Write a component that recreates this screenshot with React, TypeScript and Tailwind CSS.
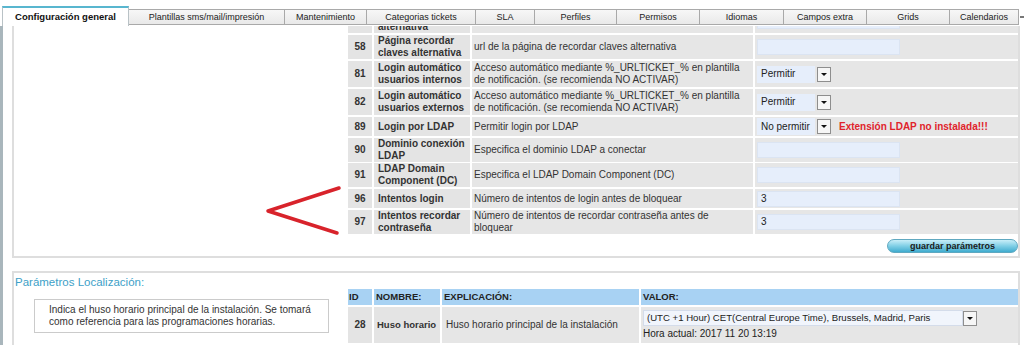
const tabs = [
  { label: 'Configuración general', w: 'w-[127px]', active: true },
  { label: 'Plantillas sms/mail/impresión', w: 'w-[156px]' },
  { label: 'Mantenimiento', w: 'w-[82px]' },
  { label: 'Categorias tickets', w: 'w-[109px]' },
  { label: 'SLA', w: 'w-[59px]' },
  { label: 'Perfiles', w: 'w-[82px]' },
  { label: 'Permisos', w: 'w-[83px]' },
  { label: 'Idiomas', w: 'w-[84px]' },
  { label: 'Campos extra', w: 'w-[83px]' },
  { label: 'Grids', w: 'w-[83px]' },
  { label: 'Calendarios', w: 'w-[69px]' },
]

type Row = {
  id: string
  name: string[]
  desc: string[]
  h: string
  kind: 'input' | 'permitir' | 'ldap'
  value?: string
  cut?: boolean
}

const rows: Row[] = [
  { id: '', name: ['alternativa'], desc: [''], h: 'h-[24px]', kind: 'input', cut: true },
  { id: '58', name: ['Página recordar', 'claves alternativa'], desc: ['url de la página de recordar claves alternativa'], h: 'h-[24px]', kind: 'input' },
  { id: '81', name: ['Login automático', 'usuarios internos'], desc: ['Acceso automático mediante %_URLTICKET_% en plantilla', 'de notificación. (se recomienda NO ACTIVAR)'], h: 'h-[26px]', kind: 'permitir' },
  { id: '82', name: ['Login automático', 'usuarios externos'], desc: ['Acceso automático mediante %_URLTICKET_% en plantilla', 'de notificación. (se recomienda NO ACTIVAR)'], h: 'h-[26px]', kind: 'permitir' },
  { id: '89', name: ['Login por LDAP'], desc: ['Permitir login por LDAP'], h: 'h-[19px]', kind: 'ldap' },
  { id: '90', name: ['Dominio conexión', 'LDAP'], desc: ['Especifica el dominio LDAP a conectar'], h: 'h-[23px]', kind: 'input' },
  { id: '91', name: ['LDAP Domain', 'Component (DC)'], desc: ['Especifica el LDAP Domain Component (DC)'], h: 'h-[24px]', kind: 'input' },
  { id: '96', name: ['Intentos login'], desc: ['Número de intentos de login antes de bloquear'], h: 'h-[19px]', kind: 'input', value: '3' },
  { id: '97', name: ['Intentos recordar', 'contraseña'], desc: ['Número de intentos de recordar contraseña antes de', 'bloquear'], h: 'h-[24px]', kind: 'input', value: '3' },
]

function Arrow() {
  return (
    <span className="flex h-[15px] w-[14px] items-center justify-center border border-[#8e8e8e] bg-[#f6f6f6]">
      <span className="h-0 w-0 border-x-[3px] border-t-[3px] border-x-transparent border-t-[#111]" />
    </span>
  )
}

function Lines({ lines }: { lines: string[] }) {
  return (
    <div>
      {lines.map((l, i) => (
        <div key={i} className="whitespace-nowrap">
          {l}
        </div>
      ))}
    </div>
  )
}

function Value({ row }: { row: Row }) {
  if (row.kind === 'permitir' || row.kind === 'ldap') {
    return (
      <div className="flex items-center gap-[2px]">
        <div className="flex h-[17px] w-[58px] items-center bg-[#e6eefb] pl-[4px] text-[#222]">
          {row.kind === 'ldap' ? 'No permitir' : 'Permitir'}
        </div>
        <Arrow />
        {row.kind === 'ldap' && (
          <span className="ml-[6px] font-bold text-[#e0232b]">Extensión LDAP no instalada!!!</span>
        )}
      </div>
    )
  }
  return (
    <div className="flex h-[16px] w-[143px] items-center border border-[#dbe4f2] bg-[#e6eefb] pl-[3px] text-[#222]">
      {row.value}
    </div>
  )
}

export default function App() {
  return (
    <div className="relative h-[345px] w-[1024px] overflow-hidden bg-white font-['Liberation_Sans',Arial,sans-serif] text-[10px] leading-[12px] text-[#333]">
      {/* tabs */}
      <div className="flex h-[26px] items-end pl-[2px]">
        {tabs.map((t) =>
          t.active ? (
            <div
              key={t.label}
              className={`${t.w} flex h-[20px] items-center justify-center border-x border-t-2 border-x-[#b9c2c6] border-t-[#58b6cf] bg-white text-[9.5px] font-bold text-[#111]`}
            >
              {t.label}
            </div>
          ) : (
            <div
              key={t.label}
              className={`${t.w} mb-[1px] flex h-[16px] items-center justify-center border border-l-0 border-[#a9a9a9] bg-gradient-to-b from-[#f7f7f7] to-[#e9e9e9] text-[9px] text-[#222]`}
            >
              {t.label}
            </div>
          ),
        )}
        <div className="mb-[8px] ml-[1px] h-[2px] w-[4px] bg-[#777]" />
      </div>

      <div className="flex h-[319px]">
        <div className="w-[3px] bg-[#a9b6bc]" />
        <div className="ml-[9px] w-[1008px]">
          {/* panel 1 */}
          <div className="flex h-[232px] overflow-hidden border-x-2 border-b-2 border-[#dedede]">
            <div className="w-[334px]" />
            <div className="w-[670px]">
              <div className="-mt-[17px] flex flex-col gap-[2px]">
                {rows.map((r, i) => (
                  <div key={i} className={`grid ${r.h} grid-cols-[24px_96px_281px_1fr] gap-[2px]`}>
                    <div className="flex items-center justify-center bg-[#e4e4e4] font-bold">{r.id}</div>
                    <div className={`flex ${r.cut ? 'items-end' : 'items-center'} bg-[#e4e4e4] pl-[4px] font-bold`}>
                      <Lines lines={r.name} />
                    </div>
                    <div className="flex items-center bg-[#e6e6e6] pl-[2px]">
                      <Lines lines={r.desc} />
                    </div>
                    <div className="flex items-center bg-[#e6e6e6] pl-[2px]">
                      <Value row={r} />
                    </div>
                  </div>
                ))}
              </div>
              <div className="mt-[5px] flex justify-end">
                <button className="h-[14px] w-[131px] rounded-full border border-[#5fa8c0] bg-gradient-to-b from-[#c8eef8] via-[#7fcfe6] to-[#3eaccf] text-[9px] leading-[12px] font-bold text-[#1a1a1a]">
                  guardar parámetros
                </button>
              </div>
            </div>
          </div>

          {/* panel 2 */}
          <div className="mt-[13px] h-[80px] border-x-2 border-t-2 border-[#dedede]">
            <div className="h-[16px] pl-[1px] pt-[2px] text-[11.5px] leading-[14px] text-[#3d9fc8]">
              Parámetros Localización:
            </div>
            <div className="flex">
              <div className="w-[334px]">
                <div className="ml-[20px] mt-[10px] h-[34px] w-[295px] border border-[#cbcbcb] bg-white pl-[14px] pt-[4px] text-[#333]">
                  <div>Indica el huso horario principal de la instalación. Se tomará</div>
                  <div>como referencia para las programaciones horarias.</div>
                </div>
              </div>
              <div className="w-[670px]">
                <div className="grid h-[16px] grid-cols-[24px_66px_197px_1fr] gap-[2px] text-[9.5px] font-bold text-[#222]">
                  <div className="flex items-center bg-[#a8d2f3] pl-[1px]">ID</div>
                  <div className="flex items-center bg-[#a8d2f3] pl-[2px]">NOMBRE:</div>
                  <div className="flex items-center bg-[#a8d2f3] pl-[2px]">EXPLICACIÓN:</div>
                  <div className="flex items-center bg-[#a8d2f3] pl-[2px]">VALOR:</div>
                </div>
                <div className="mt-[2px] grid h-[36px] grid-cols-[24px_66px_197px_1fr] gap-[2px]">
                  <div className="flex items-center justify-center bg-[#e4e4e4] font-bold">28</div>
                  <div className="flex items-center whitespace-nowrap bg-[#e4e4e4] pl-[3px] text-[9.5px] font-bold">
                    Huso horario
                  </div>
                  <div className="flex items-center bg-[#e6e6e6] pl-[4px]">Huso horario principal de la instalación</div>
                  <div className="flex flex-col justify-center bg-[#e6e6e6] pl-[2px]">
                    <div className="flex w-[334px] items-center">
                      <div className="flex h-[16px] flex-1 items-center whitespace-nowrap border border-[#d4dcea] bg-[#f1f5fc] pl-[3px] text-[9.6px] text-[#222]">
                        (UTC +1 Hour) CET(Central Europe Time), Brussels, Madrid, Paris
                      </div>
                      <Arrow />
                    </div>
                    <div className="mt-[2px] text-[#222]">Hora actual: 2017 11 20 13:19</div>
                  </div>
                </div>
              </div>
            </div>
          </div>
        </div>
      </div>

      {/* red annotation arrow */}
      <svg className="absolute left-[260px] top-[180px]" width="90" height="60" viewBox="0 0 90 60">
        <polyline
          points="79,8 8,31 77,53"
          fill="none"
          stroke="#d8232b"
          strokeWidth="3.5"
          strokeLinecap="round"
          strokeLinejoin="round"
        />
      </svg>
    </div>
  )
}
